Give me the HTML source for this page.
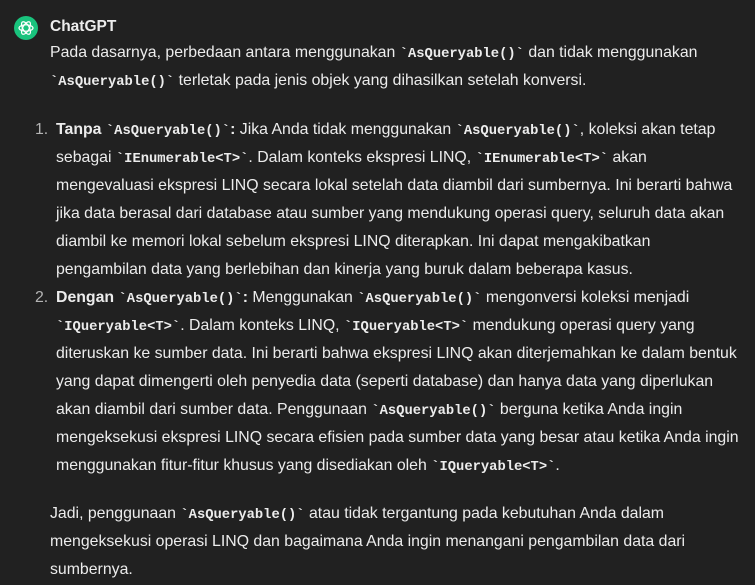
<!DOCTYPE html>
<html><head><meta charset="utf-8"><style>
html,body{margin:0;padding:0;background:#212121;width:755px;height:585px;overflow:hidden}
body{font-family:"Liberation Sans",sans-serif;color:#ececec;font-size:15.85px;position:relative}
.l{position:absolute;white-space:nowrap;height:28px;line-height:28px}
code{font-family:"Liberation Mono",monospace;font-weight:bold;font-size:13.8px;color:#ececec}
b{font-weight:bold}
.n{position:absolute;color:#b4b4b4;line-height:28px}
</style></head><body>
<svg style="position:absolute;left:14px;top:16px" width="24" height="24" viewBox="0 0 24 24">
<circle cx="12" cy="12" r="12" fill="#19c37d"/>
<g fill="none" stroke="#fff" stroke-width="1.2">
<ellipse cx="12" cy="12" rx="7" ry="3.2" transform="rotate(0 12 12)"/>
<ellipse cx="12" cy="12" rx="7" ry="3.2" transform="rotate(60 12 12)"/>
<ellipse cx="12" cy="12" rx="7" ry="3.2" transform="rotate(120 12 12)"/>
</g></svg>
<div class="l" style="left:50px;top:13px;font-weight:bold;font-size:15.5px">ChatGPT</div>
<div class="l" style="left:50px;top:39px">Pada dasarnya, perbedaan antara menggunakan <code>`AsQueryable()`</code> dan tidak menggunakan</div>
<div class="l" style="left:50px;top:67px"><code>`AsQueryable()`</code> terletak pada jenis objek yang dihasilkan setelah konversi.</div>

<div class="n" style="left:35px;top:116px">1.</div>
<div class="l" style="left:56px;top:116px"><b>Tanpa <code>`AsQueryable()`</code>:</b> Jika Anda tidak menggunakan <code>`AsQueryable()`</code>, koleksi akan tetap</div>
<div class="l" style="left:56px;top:144px">sebagai <code>`IEnumerable&lt;T&gt;`</code>. Dalam konteks ekspresi LINQ, <code>`IEnumerable&lt;T&gt;`</code> akan</div>
<div class="l" style="left:56px;top:172px">mengevaluasi ekspresi LINQ secara lokal setelah data diambil dari sumbernya. Ini berarti bahwa</div>
<div class="l" style="left:56px;top:200px">jika data berasal dari database atau sumber yang mendukung operasi query, seluruh data akan</div>
<div class="l" style="left:56px;top:228px">diambil ke memori lokal sebelum ekspresi LINQ diterapkan. Ini dapat mengakibatkan</div>
<div class="l" style="left:56px;top:256px">pengambilan data yang berlebihan dan kinerja yang buruk dalam beberapa kasus.</div>

<div class="n" style="left:35px;top:284px">2.</div>
<div class="l" style="left:56px;top:284px"><b>Dengan <code>`AsQueryable()`</code>:</b> Menggunakan <code>`AsQueryable()`</code> mengonversi koleksi menjadi</div>
<div class="l" style="left:56px;top:312px"><code>`IQueryable&lt;T&gt;`</code>. Dalam konteks LINQ, <code>`IQueryable&lt;T&gt;`</code> mendukung operasi query yang</div>
<div class="l" style="left:56px;top:340px">diteruskan ke sumber data. Ini berarti bahwa ekspresi LINQ akan diterjemahkan ke dalam bentuk</div>
<div class="l" style="left:56px;top:368px">yang dapat dimengerti oleh penyedia data (seperti database) dan hanya data yang diperlukan</div>
<div class="l" style="left:56px;top:396px">akan diambil dari sumber data. Penggunaan <code>`AsQueryable()`</code> berguna ketika Anda ingin</div>
<div class="l" style="left:56px;top:424px">mengeksekusi ekspresi LINQ secara efisien pada sumber data yang besar atau ketika Anda ingin</div>
<div class="l" style="left:56px;top:452px">menggunakan fitur-fitur khusus yang disediakan oleh <code>`IQueryable&lt;T&gt;`</code>.</div>

<div class="l" style="left:50px;top:500px">Jadi, penggunaan <code>`AsQueryable()`</code> atau tidak tergantung pada kebutuhan Anda dalam</div>
<div class="l" style="left:50px;top:528px">mengeksekusi operasi LINQ dan bagaimana Anda ingin menangani pengambilan data dari</div>
<div class="l" style="left:50px;top:556px">sumbernya.</div>
</body></html>
